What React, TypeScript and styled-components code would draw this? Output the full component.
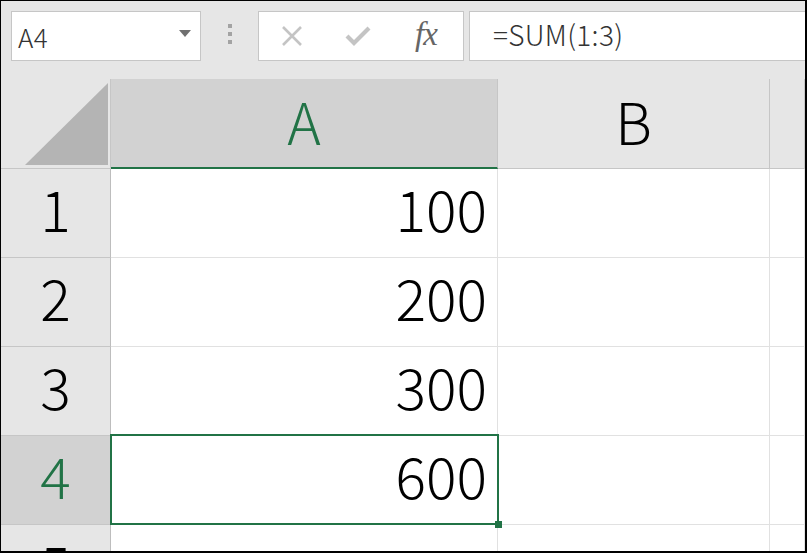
import React from "react";
import styled, { createGlobalStyle } from "styled-components";

const Global = createGlobalStyle`
  html, body { margin: 0; padding: 0; background: #ffffff; }
  * { box-sizing: border-box; }
`;

const GREEN = "#217346";
const FONT = `"Noto Sans CJK JP", "Noto Sans", sans-serif`;

const Frame = styled.div`
  width: 807px;
  height: 553px;
  overflow: hidden;
  border-top: 1px solid #000;
  border-left: 1px solid #000;
  border-right: 2px solid #000;
  border-bottom: 2px solid #000;
  background: #fff;
  font-family: ${FONT};
  font-weight: 300;
  display: flex;
  flex-direction: column;
`;

const Toolbar = styled.div`
  flex: none;
  height: 78px;
  background: #e6e6e6;
  display: flex;
  align-items: flex-start;
  padding: 10px 0 0 10px;
`;

const Box = styled.div<{ $w?: number }>`
  height: 50px;
  background: #fff;
  border: 1px solid #c6c6c6;
  display: flex;
  align-items: center;
  ${(p) => (p.$w ? `width: ${p.$w}px; flex: none;` : `flex: 1; border-right: none;`)}
`;

const NameText = styled.span`
  flex: 1;
  padding-left: 6px;
  font-size: 26px;
  color: #333;
  letter-spacing: 0.5px;
`;

const DropArrow = styled.span`
  width: 0;
  height: 0;
  border-left: 6.5px solid transparent;
  border-right: 6.5px solid transparent;
  border-top: 7px solid #707070;
  margin-right: 9px;
  margin-top: -6px;
`;

const Dots = styled.div`
  width: 57px;
  height: 50px;
  flex: none;
  display: flex;
  flex-direction: column;
  align-items: center;
  justify-content: center;
  gap: 4px;
  margin-top: -2px;
`;

const Dot = styled.span`
  width: 4px;
  height: 4px;
  background: #a3a3a3;
`;

const IconBtn = styled.div`
  width: 66px;
  display: flex;
  justify-content: center;
  align-items: center;
`;

const Fx = styled.span`
  font-family: "Liberation Serif", "DejaVu Serif", serif;
  font-style: italic;
  font-weight: 400;
  font-size: 33px;
  color: #666;
  letter-spacing: -1px;
  margin-top: -4px;
  margin-left: 4px;
`;

const Formula = styled.span`
  padding-left: 23px;
  font-size: 28px;
  color: #333;
  margin-top: -5px;
  letter-spacing: 0.3px;
`;

const Sheet = styled.div`
  flex: 1;
  display: flex;
  flex-direction: column;
`;

const Row = styled.div<{ $h: number }>`
  display: flex;
  flex: none;
  height: ${(p) => p.$h}px;
`;

const Corner = styled.div`
  width: 110px;
  flex: none;
  background: #e6e6e6;
  border-right: 1px solid #c6c6c6;
  border-bottom: 1px solid #c6c6c6;
  display: flex;
  align-items: flex-end;
  justify-content: flex-end;
  padding: 0 2px 3px 0;
`;

const ColHead = styled.div<{ $w?: number; $sel?: boolean }>`
  ${(p) => (p.$w ? `width: ${p.$w}px; flex: none;` : `flex: 1;`)}
  background: ${(p) => (p.$sel ? "#d2d2d2" : "#e6e6e6")};
  border-right: 1px solid #c6c6c6;
  border-bottom: ${(p) => (p.$sel ? `2px solid ${GREEN}` : "1px solid #c6c6c6")};
  display: flex;
  align-items: center;
  justify-content: center;
  font-size: 57px;
  color: ${(p) => (p.$sel ? GREEN : "#000")};
  padding-bottom: ${(p) => (p.$sel ? "6px" : "7px")};
`;

const RowHead = styled.div<{ $sel?: boolean }>`
  width: 110px;
  flex: none;
  background: ${(p) => (p.$sel ? "#d2d2d2" : "#e6e6e6")};
  border-right: 1px solid #bdbdbd;
  border-bottom: 1px solid #c6c6c6;
  display: flex;
  align-items: center;
  justify-content: center;
  font-size: 57px;
  color: ${(p) => (p.$sel ? GREEN : "#000")};
  padding-bottom: 12px;
`;

const Cell = styled.div<{ $w?: number }>`
  ${(p) => (p.$w ? `width: ${p.$w}px; flex: none;` : `flex: 1;`)}
  position: relative;
  border-right: 1px solid #e1e1e1;
  border-bottom: 1px solid #e1e1e1;
  display: flex;
  align-items: center;
  justify-content: flex-end;
  padding: 0 10px 12px 0;
  font-size: 57px;
  color: #000;
`;

const Selection = styled.div`
  position: absolute;
  z-index: 2;
  left: -1px;
  top: -2px;
  right: -2px;
  bottom: -1px;
  border: 2px solid ${GREEN};
  pointer-events: none;
`;

const Handle = styled.div`
  position: absolute;
  right: -5px;
  bottom: -5px;
  width: 7px;
  height: 7px;
  background: ${GREEN};
`;

const rows = [
  { n: "1", v: "100" },
  { n: "2", v: "200" },
  { n: "3", v: "300" },
  { n: "4", v: "600", sel: true },
  { n: "5", v: "" },
];

export default function App() {
  return (
    <>
      <Global />
      <Frame>
        <Toolbar>
          <Box $w={190}>
            <NameText>A4</NameText>
            <DropArrow />
          </Box>
          <Dots>
            <Dot />
            <Dot />
            <Dot />
          </Dots>
          <Box $w={206}>
            <IconBtn>
              <svg width="22" height="20" viewBox="0 0 22 20">
                <path d="M2 1 L20 19 M20 1 L2 19" stroke="#c4c4c4" strokeWidth="2.6" fill="none" />
              </svg>
            </IconBtn>
            <IconBtn>
              <svg width="26" height="20" viewBox="0 0 26 20">
                <path d="M2 10 L9 17 L24 2" stroke="#c4c4c4" strokeWidth="4.2" fill="none" />
              </svg>
            </IconBtn>
            <IconBtn>
              <Fx>fx</Fx>
            </IconBtn>
          </Box>
          <Box style={{ marginLeft: 5 }}>
            <Formula>=SUM(1:3)</Formula>
          </Box>
        </Toolbar>
        <Sheet>
          <Row $h={90}>
            <Corner>
              <svg width="83" height="82" viewBox="0 0 83 82">
                <polygon points="83,0 83,82 0,82" fill="#b4b4b4" />
              </svg>
            </Corner>
            <ColHead $w={387} $sel>
              A
            </ColHead>
            <ColHead $w={272}>B</ColHead>
            <ColHead />
          </Row>
          {rows.map((r) => (
            <Row $h={89} key={r.n}>
              <RowHead $sel={r.sel}>{r.n}</RowHead>
              <Cell $w={387}>
                {r.v}
                {r.sel && (
                  <Selection>
                    <Handle />
                  </Selection>
                )}
              </Cell>
              <Cell $w={272} />
              <Cell />
            </Row>
          ))}
        </Sheet>
      </Frame>
    </>
  );
}
